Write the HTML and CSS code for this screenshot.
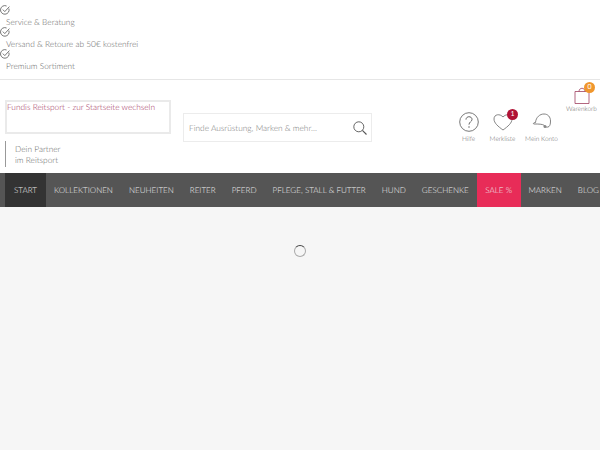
FILE: index.html
```html
<!doctype html>
<html lang="de">
<head>
<meta charset="UTF-8">
<title>Fundis Reitsport</title>
<link rel="stylesheet" href="styles.css">
</head>
<body>
<svg class="defs" width="0" height="0">
	<symbol id="check" viewBox="0 0 10 10">
		<path d="M8.900 3.600A4.300 4.300 0 1 1 6.600 1" fill="none" stroke="#666" stroke-width=".9"/>
		<path d="M2.800 4.600l2 2L9.400 1.600" fill="none" stroke="#666" stroke-width=".9"/>
	</symbol>
</svg>
<ul class="usp">
	<li><svg class="check"><use href="#check"/></svg><span>Service &amp; Beratung</span></li>
	<li><svg class="check"><use href="#check"/></svg><span>Versand &amp; Retoure ab 50€ kostenfrei</span></li>
	<li><svg class="check"><use href="#check"/></svg><span>Premium Sortiment</span></li>
</ul>
<header class="head">
	<div class="brand">
		<a class="logo" href="#">Fundis Reitsport - zur Startseite wechseln</a>
		<p class="claim">Dein Partner<br>im Reitsport</p>
	</div>
	<form class="search">
		<span class="ph">Finde Ausrüstung, Marken &amp; mehr...</span>
		<svg width="14" height="14" viewBox="0 0 14 14"><circle cx="5.800" cy="5.800" r="5" fill="none" stroke="#555" stroke-width=".9"/><path d="M9.400 9.400L13.500 13.500" stroke="#555" stroke-width="1.100"/></svg>
	</form>
	<div class="tools">
		<a class="tool" href="#">
			<svg width="20" height="20" viewBox="0 0 20 20"><circle cx="10" cy="10" r="9.300" fill="none" stroke="#555" stroke-width=".8"/><path d="M7 7.600C7 3.800 13 3.800 13 7.400c0 2.400-3 2.400-3 5.200" fill="none" stroke="#555" stroke-width=".9"/><circle cx="10" cy="15" r=".7" fill="#555"/></svg>
			<span>Hilfe</span>
		</a>
		<a class="tool" href="#">
			<svg width="20" height="20" viewBox="0 0 20 20"><path d="M10 18C5 14.400 1 11 1 7c0-5 6-5.500 9-2 3-3.500 9-3 9 2 0 4-4 7.400-9 11z" fill="none" stroke="#666" stroke-width=".8"/></svg>
			<span>Merkliste</span>
			<b class="count red">1</b>
		</a>
		<a class="tool helmet" href="#">
			<svg width="20" height="20" viewBox="0 0 20 20"><path d="M3.500 10.500C4 5 8 2 12 2c4 0 6.500 3 6.500 7 0 3-.5 4.500-1.500 5.500-1.500 1-3.500 1-4.500-1-2-1.500-6-1.500-10.500-1.500-.8 0-.8-.8 0-1.200z" fill="none" stroke="#666" stroke-width=".8"/><circle cx="13" cy="14.500" r="1.500" fill="#888"/></svg>
			<span>Mein Konto</span>
		</a>
		<a class="tool cart" href="#">
			<svg width="16" height="17" viewBox="0 0 16 17"><path d="M1 4.500h14V16.500H1z" fill="none" stroke="#a04060" stroke-width=".8"/><path d="M5 4.500C5 .2 11 .2 11 4.500" fill="none" stroke="#a04060" stroke-width=".8"/></svg>
			<span>Warenkorb</span>
			<b class="count orange">0</b>
		</a>
	</div>
</header>
<nav class="nav">
	<a class="active" href="#">START</a>
	<a href="#">KOLLEKTIONEN</a>
	<a href="#">NEUHEITEN</a>
	<a href="#">REITER</a>
	<a href="#">PFERD</a>
	<a href="#">PFLEGE, STALL &amp; FUTTER</a>
	<a href="#">HUND</a>
	<a href="#">GESCHENKE</a>
	<a class="sale" href="#">SALE %</a>
	<a href="#">MARKEN</a>
	<a href="#">BLOG</a>
</nav>
<main class="content">
	<div class="spinner"></div>
</main>
</body>
</html>
```
FILE: styles.css
```css
html, body{
	margin:0;
	height:100%;
	overflow:hidden;
}
body{
	background:#fff;
	color:#666;
	font-family:Lato, "Liberation Sans", sans-serif;
	font-weight:300;
	font-size:8.300px;
	text-rendering:geometricPrecision;
	display:flex;
	flex-direction:column;
}
a{
	color:inherit;
	text-decoration:none;
}
.defs{
	display:block;
	height:0;
}
.usp{
	list-style:none;
	margin:0;
	padding:5px 0 7px;
	height:67px;
	border-bottom:1px solid #e6e6e6;
}
.usp li{
	height:22px;
}
.check{
	display:block;
	width:10px;
	height:10px;
}
.usp span{
	display:block;
	margin:1px 0 0 6px;
	line-height:13px;
}
.head{
	display:flex;
	height:93px;
	flex:none;
}
.brand{
	width:166px;
	margin:20px 12px 0 5px;
}
.logo{
	display:block;
	height:30px;
	border:2px solid #eaeaea;
	color:#a0305a;
	line-height:11px;
}
.claim{
	margin:7px 0 0;
	padding:3px 0 0 9px;
	height:23px;
	line-height:10.500px;
	border-left:1px solid #999;
}
.search{
	display:flex;
	align-items:center;
	justify-content:space-between;
	box-sizing:border-box;
	width:189px;
	height:29px;
	margin-top:33px;
	padding:0 4px 0 5px;
	border:1px solid #ececec;
}
.ph{
	color:#777;
}
.tools{
	position:relative;
	flex:1;
	display:flex;
	gap:3px;
	padding:32px 0 0 81px;
}
.tool{
	position:relative;
	display:flex;
	flex-direction:column;
	align-items:center;
	width:31px;
	font-size:6.500px;
	line-height:8px;
}
.tool svg{
	margin-bottom:4px;
}
.tool span{
	white-space:nowrap;
}
.helmet{
	margin-left:5px;
}
.cart{
	position:absolute;
	top:7px;
	right:3px;
}
.cart svg{
	margin-bottom:2px;
}
.count{
	position:absolute;
	top:-3px;
	right:0;
	width:11px;
	height:11px;
	border-radius:50%;
	color:#fff;
	text-align:center;
	font-size:7px;
	font-weight:400;
	line-height:11px;
}
.red{
	background:#b01235;
}
.orange{
	top:-5px;
	right:2px;
	background:#f0962c;
}
.nav{
	display:flex;
	flex:none;
	height:34px;
	padding-left:5px;
	background:#555;
	color:#eee;
	white-space:nowrap;
	overflow:hidden;
}
.nav a{
	padding:0 8px;
	line-height:34px;
	font-size:8.050px;
}
.nav .active{
	padding:0 9px;
	background:#333;
}
.nav .sale{
	padding:0 8.500px;
	background:#e82c58;
}
.content{
	flex:1;
	background:#f6f6f6;
	display:flex;
	justify-content:center;
	padding-top:38px;
}
.spinner{
	width:10px;
	height:10px;
	border:1px solid #aaa;
	border-top-color:#444;
	border-radius:50%;
}
```
